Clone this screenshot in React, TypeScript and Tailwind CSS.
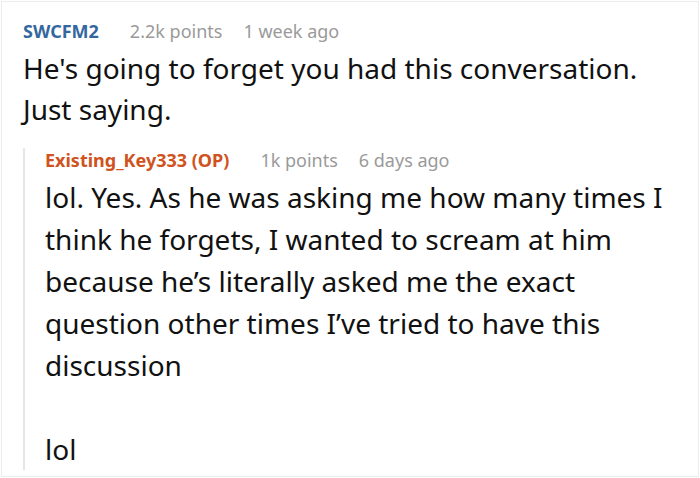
import React from 'react';

const font = { fontFamily: '"Noto Sans", "Open Sans", sans-serif' };

const CommentHeader: React.FC<{ user: string; points: string; time: string; op?: boolean }> = ({ user, points, time, op }) => (
    <div className="flex items-baseline text-[18px] leading-[24px]">
        <span className={`font-bold mr-[31px] ${op ? 'text-[#cf5220]' : 'text-[#35679f]'}`}>{user}</span>
        <span className="text-[#9a9a9a] mr-[21px]">{points}</span>
        <span className="text-[#9a9a9a]">{time}</span>
    </div>
);

const App: React.FC = () => {
    return (
        <div className="w-[700px] h-[478px] bg-white p-[1px] overflow-hidden" style={font}>
            <div className="w-full h-full border border-[#ececec] pl-[21px] pt-[17px]">
                <CommentHeader user="SWCFM2" points="2.2k points" time="1 week ago" />
                <p className="text-[28px] leading-[41px] text-[#111] mt-[5px]">
                    He's going to forget you had this conversation.
                    <br />
                    Just saying.
                </p>

                <div className="mt-[18px] border-l-2 border-[#e6e6e6] pl-[20px]">
                    <CommentHeader user="Existing_Key333 (OP)" points="1k points" time="6 days ago" op />
                    <p className="text-[28px] leading-[42px] text-[#111] mt-[4px] mb-[-18px] pr-[20px]">
                        lol. Yes. As he was asking me how many times I think he forgets, I wanted to scream at him because he’s literally asked me the exact question other times I’ve tried to have this discussion
                        <br />
                        <br />
                        lol
                    </p>
                </div>
            </div>
        </div>
    );
};

export default App;
